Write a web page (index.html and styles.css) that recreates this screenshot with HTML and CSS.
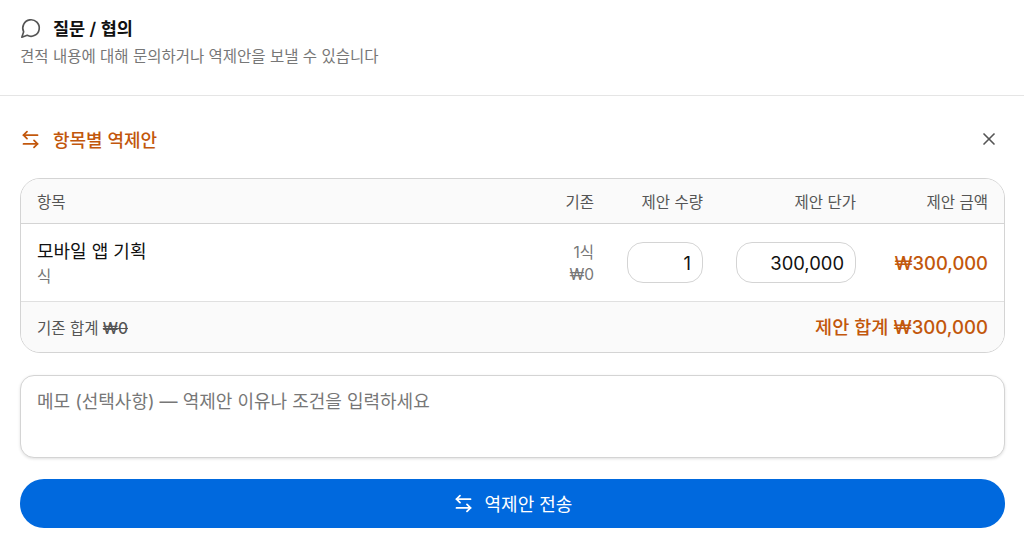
FILE: index.html
```html
<!DOCTYPE html>
<html lang="ko">
<head>
  <meta charset="UTF-8">
  <title>질문 / 협의</title>
  <link rel="stylesheet" href="styles.css">
</head>
<body>

<div class="top">
  <div class="top-title">
    <svg class="icon-chat" width="22" height="22" viewBox="0 0 24 24" fill="none" stroke="currentColor" stroke-width="1.8" stroke-linecap="round" stroke-linejoin="round"><path d="M7.9 20A9 9 0 1 0 4 16.1L2 22Z"/></svg>
    <h2>질문 / 협의</h2>
  </div>
  <p class="top-sub">견적 내용에 대해 문의하거나 역제안을 보낼 수 있습니다</p>
</div>

<div class="offer">
  <div class="offer-head">
    <div class="offer-title">
      <svg width="21" height="21" viewBox="0 0 24 24" fill="none" stroke="currentColor" stroke-width="2" stroke-linecap="round" stroke-linejoin="round"><path d="M8 3 4 7l4 4"/><path d="M4 7h16"/><path d="m16 21 4-4-4-4"/><path d="M20 17H4"/></svg>
      <h3>항목별 역제안</h3>
    </div>
    <svg class="icon-close" width="20" height="20" viewBox="0 0 24 24" fill="none" stroke="currentColor" stroke-width="2" stroke-linecap="round" stroke-linejoin="round"><path d="M18 6 6 18"/><path d="m6 6 12 12"/></svg>
  </div>

  <div class="table">
    <div class="row row-head">
      <span>항목</span>
      <span class="right">기존</span>
      <span class="right">제안 수량</span>
      <span class="right">제안 단가</span>
      <span class="right">제안 금액</span>
    </div>
    <div class="row row-item">
      <div class="item-info">
        <div class="item-name">모바일 앱 기획</div>
        <div class="item-unit">식</div>
      </div>
      <div class="right base">
        <div>1식</div>
        <div>₩0</div>
      </div>
      <input class="num" type="text" value="1">
      <input class="num" type="text" value="300,000">
      <div class="right amount">₩300,000</div>
    </div>
    <div class="table-foot">
      <span class="old-total">기존 합계 <s>₩0</s></span>
      <span class="new-total">제안 합계 ₩300,000</span>
    </div>
  </div>

  <textarea class="memo" placeholder="메모 (선택사항) — 역제안 이유나 조건을 입력하세요"></textarea>

  <button class="send" type="button">
    <svg width="21" height="21" viewBox="0 0 24 24" fill="none" stroke="currentColor" stroke-width="2" stroke-linecap="round" stroke-linejoin="round"><path d="M8 3 4 7l4 4"/><path d="M4 7h16"/><path d="m16 21 4-4-4-4"/><path d="M20 17H4"/></svg>
    <span class="send-text">역제안 전송</span>
  </button>
</div>

</body>
</html>
```

FILE: styles.css
```css
* {
  box-sizing: border-box;
}
body {
  margin: 0;
  background-color: #fff;
  color: #111;
  font-family: Inter, "Noto Sans CJK KR", sans-serif;
}
.top {
  height: 96px;
  padding: 14px 20px 0;
  border-bottom: 1px solid #e5e5e5;
}
.top-title {
  display: flex;
  align-items: center;
  gap: 11px;
  height: 26px;
}
.icon-chat {
  color: #555;
  margin-top: 2px;
}
.top-title h2 {
  margin: 0;
  font-size: 17.5px;
  font-weight: 600;
}
.top-sub {
  margin: 7px 0 0;
  font-size: 15.5px;
  line-height: 20px;
  color: #777;
}
.offer {
  padding: 31px 19px 0 20px;
}
.offer-head {
  display: flex;
  justify-content: space-between;
  align-items: center;
  height: 24px;
  padding-right: 6px;
}
.offer-title {
  display: flex;
  align-items: center;
  gap: 12px;
  color: #c2570c;
}
.offer-title h3 {
  margin: 0;
  font-size: 18px;
  font-weight: 500;
}
.icon-close {
  color: #555;
}
.table {
  margin-top: 27px;
  border: 1px solid #d4d4d4;
  border-radius: 20px;
  overflow: hidden;
}
.row {
  display: grid;
  grid-template-columns: 1fr 60px 76px 120px 99px;
  column-gap: 33px;
  align-items: center;
  padding: 0 16px;
}
.right {
  text-align: right;
}
.row-head {
  height: 45px;
  background-color: #fafafa;
  border-bottom: 1px solid #d4d4d4;
  font-size: 15.5px;
  color: #555;
}
.row-item {
  height: 78px;
  border-bottom: 1px solid #e0e0e0;
}
.item-info {
  padding-top: 2px;
}
.item-name {
  font-size: 18px;
  line-height: 25px;
}
.item-unit {
  margin-top: 1px;
  font-size: 15.5px;
  line-height: 24px;
  color: #777;
}
.base {
  padding-top: 2px;
  font-size: 15.5px;
  line-height: 22px;
  color: #777;
}
.num {
  width: 100%;
  height: 41px;
  padding: 0 11px;
  border: 1px solid #d4d4d4;
  border-radius: 16px;
  background-color: #fff;
  color: #111;
  font-family: inherit;
  font-size: 18.4px;
  text-align: right;
  outline: none;
}
.amount {
  font-size: 18.4px;
  font-weight: 500;
  color: #c2570c;
}
.table-foot {
  display: flex;
  justify-content: space-between;
  align-items: center;
  height: 50px;
  padding: 0 16px;
  background-color: #fafafa;
}
.old-total {
  font-size: 15.5px;
  color: #555;
}
.old-total s {
  font-weight: 500;
}
.new-total {
  margin-bottom: 3px;
  font-size: 18.6px;
  font-weight: 500;
  color: #c2570c;
}
.memo {
  display: block;
  width: 100%;
  height: 83px;
  margin-top: 22px;
  padding: 13px 16px;
  border: 1px solid #d4d4d4;
  border-radius: 14px;
  box-shadow: 0 1px 3px rgba(0, 0, 0, 0.12);
  font-family: inherit;
  font-size: 18px;
  line-height: 26px;
  resize: none;
  outline: none;
}
.memo::placeholder {
  color: #777;
}
.send {
  display: flex;
  justify-content: center;
  align-items: center;
  gap: 11px;
  width: 100%;
  height: 49px;
  margin-top: 21px;
  border: none;
  border-radius: 24px;
  background-color: #0069de;
  color: #fff;
  font-family: inherit;
  font-size: 18px;
  font-weight: 400;
}
.send-text {
  margin-bottom: 2px;
}
```
